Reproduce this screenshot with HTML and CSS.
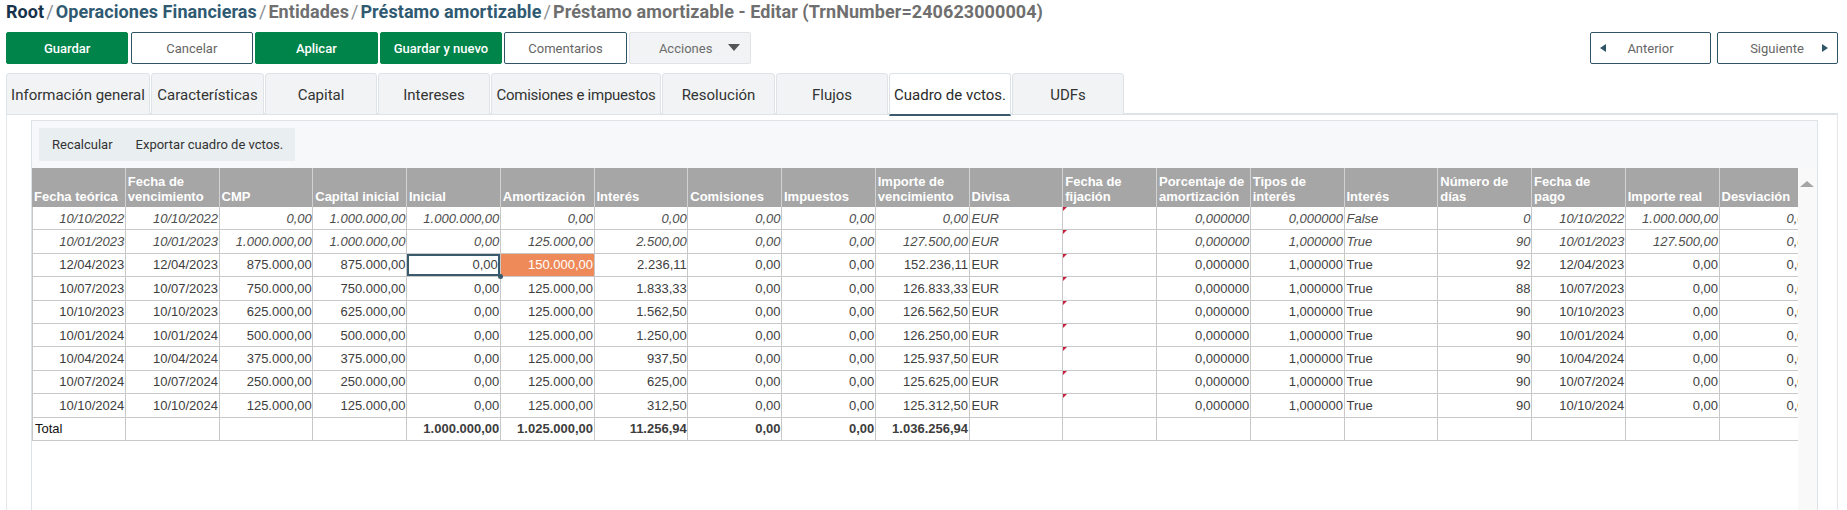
FILE: index.html
```html
<!DOCTYPE html>
<html lang="es">
<head>
<meta charset="utf-8">
<title>Préstamo amortizable - Editar</title>
<link rel="stylesheet" href="styles.css">
</head>
<body>
<nav class="crumbs"><a class="c-root">Root</a><i>/</i><a class="c-link">Operaciones Financieras</a><i>/</i><a class="c-grey">Entidades</a><i>/</i><a class="c-link">Préstamo amortizable</a><i>/</i><a class="c-grey">Préstamo amortizable - Editar (TrnNumber=240623000004)</a></nav>
<div class="actions">
  <button class="btn primary">Guardar</button>
  <button class="btn outline">Cancelar</button>
  <button class="btn primary">Aplicar</button>
  <button class="btn primary">Guardar y nuevo</button>
  <button class="btn outline">Comentarios</button>
  <button class="btn menu"><span>Acciones</span><b class="caret"></b></button>
  <div class="pager">
    <button class="btn outline nav prev"><b class="tri-l"></b>Anterior</button>
    <button class="btn outline nav next">Siguiente<b class="tri-r"></b></button>
  </div>
</div>
<div class="tabs">
  <a class="tab w144">Información general</a>
  <a class="tab w113">Características</a>
  <a class="tab w112">Capital</a>
  <a class="tab w112">Intereses</a>
  <a class="tab w170">Comisiones e impuestos</a>
  <a class="tab w113">Resolución</a>
  <a class="tab w112">Flujos</a>
  <a class="tab w122 active">Cuadro de vctos.</a>
  <a class="tab w112">UDFs</a>
</div>
<section class="panel">
  <div class="inner">
    <div class="tools"><a>Recalcular</a><a>Exportar cuadro de vctos.</a></div>
    <div class="grid-wrap">
      <div class="scroller">
        <table class="grid">
          <thead>
            <tr><th>Fecha teórica</th><th>Fecha de vencimiento</th><th>CMP</th><th>Capital inicial</th><th>Inicial</th><th>Amortización</th><th>Interés</th><th>Comisiones</th><th>Impuestos</th><th>Importe de vencimiento</th><th>Divisa</th><th>Fecha de fijación</th><th>Porcentaje de amortización</th><th>Tipos de interés</th><th>Interés</th><th>Número de días</th><th>Fecha de pago</th><th>Importe real</th><th>Desviación</th></tr>
          </thead>
          <tbody>
            <tr class="ro"><td>10/10/2022</td><td>10/10/2022</td><td>0,00</td><td>1.000.000,00</td><td>1.000.000,00</td><td>0,00</td><td>0,00</td><td>0,00</td><td>0,00</td><td>0,00</td><td class="txt">EUR</td><td class="flag"></td><td>0,000000</td><td>0,000000</td><td class="txt">False</td><td>0</td><td>10/10/2022</td><td>1.000.000,00</td><td>0,00</td></tr>
            <tr class="ro"><td>10/01/2023</td><td>10/01/2023</td><td>1.000.000,00</td><td>1.000.000,00</td><td>0,00</td><td>125.000,00</td><td>2.500,00</td><td>0,00</td><td>0,00</td><td>127.500,00</td><td class="txt">EUR</td><td class="flag"></td><td>0,000000</td><td>1,000000</td><td class="txt">True</td><td>90</td><td>10/01/2023</td><td>127.500,00</td><td>0,00</td></tr>
            <tr><td>12/04/2023</td><td>12/04/2023</td><td>875.000,00</td><td>875.000,00</td><td class="sel">0,00</td><td class="hot">150.000,00</td><td>2.236,11</td><td>0,00</td><td>0,00</td><td>152.236,11</td><td class="txt">EUR</td><td class="flag"></td><td>0,000000</td><td>1,000000</td><td class="txt">True</td><td>92</td><td>12/04/2023</td><td>0,00</td><td>0,00</td></tr>
            <tr><td>10/07/2023</td><td>10/07/2023</td><td>750.000,00</td><td>750.000,00</td><td>0,00</td><td>125.000,00</td><td>1.833,33</td><td>0,00</td><td>0,00</td><td>126.833,33</td><td class="txt">EUR</td><td class="flag"></td><td>0,000000</td><td>1,000000</td><td class="txt">True</td><td>88</td><td>10/07/2023</td><td>0,00</td><td>0,00</td></tr>
            <tr><td>10/10/2023</td><td>10/10/2023</td><td>625.000,00</td><td>625.000,00</td><td>0,00</td><td>125.000,00</td><td>1.562,50</td><td>0,00</td><td>0,00</td><td>126.562,50</td><td class="txt">EUR</td><td class="flag"></td><td>0,000000</td><td>1,000000</td><td class="txt">True</td><td>90</td><td>10/10/2023</td><td>0,00</td><td>0,00</td></tr>
            <tr><td>10/01/2024</td><td>10/01/2024</td><td>500.000,00</td><td>500.000,00</td><td>0,00</td><td>125.000,00</td><td>1.250,00</td><td>0,00</td><td>0,00</td><td>126.250,00</td><td class="txt">EUR</td><td class="flag"></td><td>0,000000</td><td>1,000000</td><td class="txt">True</td><td>90</td><td>10/01/2024</td><td>0,00</td><td>0,00</td></tr>
            <tr><td>10/04/2024</td><td>10/04/2024</td><td>375.000,00</td><td>375.000,00</td><td>0,00</td><td>125.000,00</td><td>937,50</td><td>0,00</td><td>0,00</td><td>125.937,50</td><td class="txt">EUR</td><td class="flag"></td><td>0,000000</td><td>1,000000</td><td class="txt">True</td><td>90</td><td>10/04/2024</td><td>0,00</td><td>0,00</td></tr>
            <tr><td>10/07/2024</td><td>10/07/2024</td><td>250.000,00</td><td>250.000,00</td><td>0,00</td><td>125.000,00</td><td>625,00</td><td>0,00</td><td>0,00</td><td>125.625,00</td><td class="txt">EUR</td><td class="flag"></td><td>0,000000</td><td>1,000000</td><td class="txt">True</td><td>90</td><td>10/07/2024</td><td>0,00</td><td>0,00</td></tr>
            <tr><td>10/10/2024</td><td>10/10/2024</td><td>125.000,00</td><td>125.000,00</td><td>0,00</td><td>125.000,00</td><td>312,50</td><td>0,00</td><td>0,00</td><td>125.312,50</td><td class="txt">EUR</td><td class="flag"></td><td>0,000000</td><td>1,000000</td><td class="txt">True</td><td>90</td><td>10/10/2024</td><td>0,00</td><td>0,00</td></tr>
            <tr class="total"><td class="txt">Total</td><td></td><td></td><td></td><td>1.000.000,00</td><td>1.025.000,00</td><td>11.256,94</td><td>0,00</td><td>0,00</td><td>1.036.256,94</td><td></td><td></td><td></td><td></td><td></td><td></td><td></td><td></td><td></td></tr>
          </tbody>
        </table>
      </div>
      <div class="vbar"><b class="tri-u"></b></div>
    </div>
  </div>
</section>
</body>
</html>
```
FILE: styles.css
```css
html, body { margin: 0; height: 510px; overflow: hidden; background: #fff; }
body { font-family: Roboto, "Liberation Sans", sans-serif; color: #333; }
button { font-family: inherit; }

.crumbs { height: 32px; line-height: 24px; padding-left: 6px; box-sizing: border-box; font-size: 18px; font-weight: 700; letter-spacing: .07px; white-space: nowrap; }
.crumbs i { font-style: normal; font-weight: 400; color: #8a8f93; margin: 0 2px; }
.c-root { color: #17324a; }
.c-link { color: #2f5a72; }
.c-grey { color: #6f6f6f; }

.actions { display: flex; gap: 2.2px; padding-left: 6px; padding-right: 9.5px; height: 32px; }
.btn { width: 122.4px; height: 32px; box-sizing: border-box; font-size: 13px; border-radius: 2px; padding: 0; cursor: pointer; }
.primary { background: #00844a; border: 1px solid #00844a; color: #fff; font-weight: 500; }
.outline { background: #fff; border: 1px solid #2f5468; color: #666; }
.menu { background: #f1f3f4; border: 1px solid #e0e3e5; color: #6d6d6d; display: flex; align-items: center; padding-left: 29px; }
.caret { width: 0; height: 0; border-left: 6.5px solid transparent; border-right: 6.5px solid transparent; border-top: 7px solid #555; margin-left: 16px; margin-top: -2px; }
.pager { margin-left: auto; display: flex; gap: 5.5px; }
.nav { width: 121px; display: flex; align-items: center; justify-content: center; position: relative; }
.tri-l, .tri-r { position: absolute; top: 11px; width: 0; height: 0; border-top: 4px solid transparent; border-bottom: 4px solid transparent; }
.tri-l { left: 9px; border-right: 6px solid #2f5468; }
.tri-r { right: 9px; border-left: 6px solid #2f5468; }

.tabs { display: flex; gap: 1px; padding: 9px 0 0 6px; margin-bottom: -3px; position: relative; z-index: 1; align-items: flex-start; }
.tab { height: 42px; box-sizing: border-box; background: #f1f3f5; border: 1px solid #dde3e6; border-radius: 3px 3px 0 0; font-size: 15px; color: #333; display: flex; align-items: center; justify-content: center; white-space: nowrap; padding-top: 1px; }
.w144 { width: 144px; } .w113 { width: 113px; } .w112 { width: 112px; } .w170 { width: 170px; letter-spacing: -.25px; } .w122 { width: 122px; }
.active { background: #fff; color: #2a2a2a; height: 43px; border-bottom: 2px solid #3a5a6e; }

.panel { margin: 0 9px 0 6px; height: 398px; box-sizing: border-box; border: 1px solid #e3e7ea; border-top: 2px solid #dde3e6; border-bottom: 0; padding: 5px 19px 0 24px; }
.inner { height: 100%; box-sizing: border-box; background: #f6f8fa; border: 1px solid #dde3e6; border-bottom: 0; padding-top: 7px; }
.tools { margin-left: 7px; width: 256px; height: 33px; background: #e9eef0; display: flex; align-items: center; font-size: 13px; color: #333; padding-left: 13px; box-sizing: border-box; gap: 23px; }

.grid-wrap { margin-top: 7px; display: flex; height: 343px; background: #fff; }
.scroller { width: 1766px; flex: none; overflow: hidden; }
.vbar { flex: 1; background: #f9f9f9; padding: 13px 0 0 2px; }
.tri-u { display: block; width: 0; height: 0; border-left: 7px solid transparent; border-right: 7px solid transparent; border-bottom: 6px solid #a6a6a6; }

.grid { table-layout: fixed; width: 1781.25px; border-collapse: separate; border-spacing: 0; font-family: "Liberation Sans", Arial, sans-serif; font-size: 13px; line-height: 15px; color: #3d3d3d; }
.grid th { height: 39px; box-sizing: border-box; background: #a6a6a6; color: #fff; font-weight: 700; text-align: left; vertical-align: bottom; padding: 0 1px 3px 2px; border-right: 1px solid #d2d2d2; }
.grid td { height: 23.4px; box-sizing: border-box; padding: 0 .5px 0 1px; text-align: right; white-space: nowrap; overflow: hidden; border-right: 1px solid #c8c8c8; border-bottom: 1px solid #c8c8c8; }
.grid td:first-child { border-left: 1px solid #c8c8c8; }
.grid td.txt { text-align: left; padding-left: 2px; }
.ro td { font-style: italic; color: #4d4d4d; }
.total td { font-weight: 700; }
.total td.txt { font-weight: 400; color: #111; }
.grid td.sel { box-shadow: inset 0 0 0 2px #3a5a6e; position: relative; overflow: visible; padding-right: 2px; }
.grid td.sel::after { content: ""; position: absolute; right: -3px; bottom: -3px; width: 5px; height: 5px; border-radius: 50%; background: #3a5a6e; z-index: 1; }
.grid td.hot { background: #ee8a5a; color: #fff; }
.grid td.flag { position: relative; }
.grid td.flag::before { content: ""; position: absolute; left: 0; top: 0; width: 0; height: 0; border-top: 4px solid #c8203c; border-right: 4px solid transparent; }
```
